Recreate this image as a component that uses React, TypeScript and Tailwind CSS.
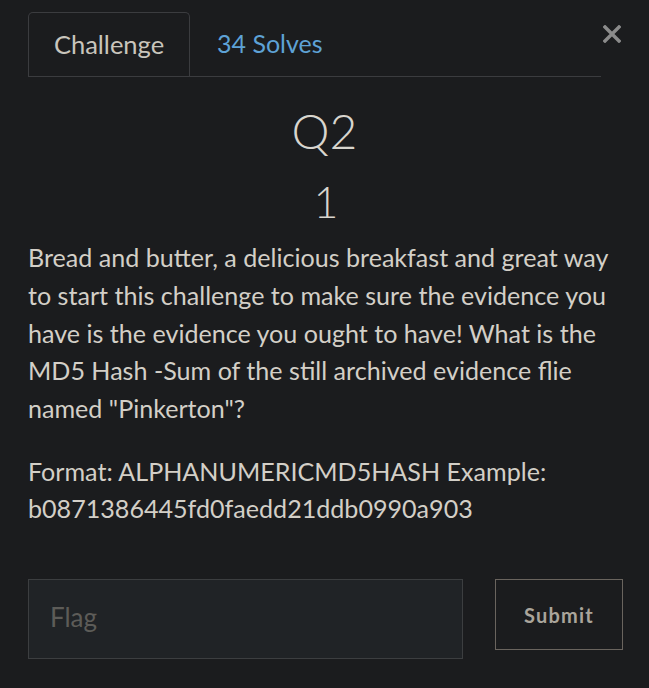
const font = { fontFamily: "Lato, 'Open Sans', sans-serif" };

const CloseIcon = () => (
  <svg width="18" height="18" viewBox="0 0 18 18" className="block">
    <path d="M2 2 L16 16 M16 2 L2 16" stroke="#8b8b8b" strokeWidth="3.4" strokeLinecap="square" />
  </svg>
);

export default function App() {
  return (
    <div className="min-h-screen w-full bg-[#1b1c1e] text-[#d3cfc7]" style={font}>
      <div className="w-[595px] ml-[28px] pt-[12px]">
        <div className="flex items-start w-[593px]">
          <div className="flex w-[573px] border-b border-[#3b3c3f]">
            <div className="h-[64px] w-[162px] flex items-center justify-center border border-b-0 border-[#3b3c3f] rounded-t-[5px] text-[25.5px] text-[#c9c5bc]">
              Challenge
            </div>
            <div className="h-[64px] flex items-center pl-[27px] text-[25px] text-[#5ea2d6]">
              34 Solves
            </div>
          </div>
          <button className="ml-auto mt-[13px]">
            <CloseIcon />
          </button>
        </div>

        <div className="w-[593px]">
          <h2 className="mt-[25px] text-center text-[48px] leading-[1.2] font-light text-[#d8d5ce]">Q2</h2>
          <h4 className="mt-[16px] pl-[3px] text-center text-[43px] leading-[1.2] font-light text-[#d8d5ce]">1</h4>

          <div className="mt-[12px] text-[25.1px] leading-[37.7px]">
            <p className="mb-[25px]">
              Bread and butter, a delicious breakfast and great way to start this challenge to make sure the evidence you have is the evidence you ought to have! What is the MD5 Hash -Sum of the still archived evidence flie named "Pinkerton"?
            </p>
            <p>Format: ALPHANUMERICMD5HASH Example: b0871386445fd0faedd21ddb0990a903</p>
          </div>
        </div>

        <div className="mt-[51px] flex items-start gap-[32px]">
          <input
            placeholder="Flag"
            className="shrink-0 h-[80px] w-[435px] bg-[#202326] border border-[#3c3e40] pl-[21px] pb-[5px] text-[26px] text-[#d3cfc7] placeholder:text-[#5d5c58] outline-none"
            style={font}
          />
          <button className="shrink-0 h-[71px] w-[128px] border border-[#6a645e] bg-[#1b1c1e] text-[20px] font-bold tracking-[1.2px] text-[#aaa59b]">
            Submit
          </button>
        </div>
      </div>
    </div>
  );
}
